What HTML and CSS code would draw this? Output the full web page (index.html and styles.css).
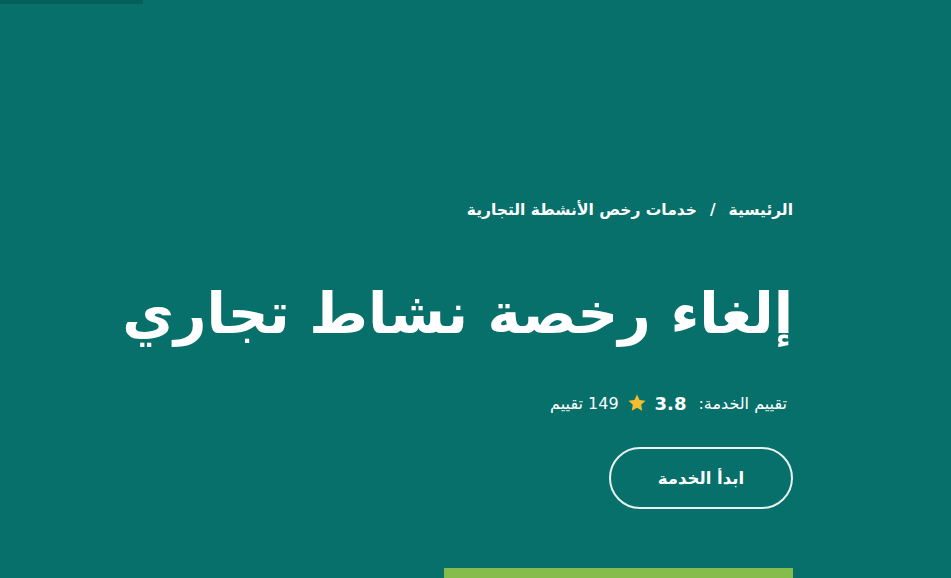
FILE: index.html
```html
<!DOCTYPE html>
<html lang="ar" dir="rtl">
<head>
<meta charset="utf-8">
<link rel="stylesheet" href="styles.css">
</head>
<body>
<div class="topbar"></div>
<main class="hero">
  <div class="container">
    <nav class="crumbs">
      <a href="#">الرئيسية</a>
      <span class="sep">/</span>
      <a href="#">خدمات رخص الأنشطة التجارية</a>
    </nav>
    <h1 class="title">إلغاء رخصة نشاط تجاري</h1>
    <div class="rating">
      <span class="label">تقييم الخدمة:</span>
      <span class="score">3.8</span>
      <svg class="star" viewBox="0 0 24 24" width="20" height="20"><path d="M12 1.8l3.1 6.5 7.1.9-5.2 4.9 1.3 7.1L12 17.8l-6.3 3.4 1.3-7.1L1.8 9.2l7.1-.9z" fill="#f5bd2e"/></svg>
      <span class="count">149 تقييم</span>
    </div>
    <a class="btn" href="#">ابدأ الخدمة</a>
    <div class="greenbar"></div>
  </div>
</main>
</body>
</html>
```
FILE: styles.css
```css
html, body {
  margin: 0;
  padding: 0;
  height: 100%;
  overflow: hidden;
}
body {
  background: #07706a;
  color: #fff;
  font-family: "DejaVu Sans", "Noto Sans", sans-serif;
}
.topbar {
  width: 143px;
  height: 4px;
  background: #05605a;
  margin-left: 0;
  margin-right: auto;
}
.hero {
  display: flex;
  justify-content: flex-start;
}
.container {
  margin-right: 158px;
  width: 700px;
  padding-top: 190px;
  display: flex;
  flex-direction: column;
  align-items: flex-start;
}
.crumbs {
  font-size: 15.5px;
  font-weight: bold;
  display: flex;
  gap: 13px;
  height: 32px;
  align-items: center;
}
.crumbs a { color: #fff; text-decoration: none; }
.title {
  margin: 43px 0 0;
  font-size: 56.5px;
  line-height: 90px;
  font-weight: bold;
  white-space: nowrap;
}
.rating {
  margin-top: 32px;
  margin-right: 6px;
  display: flex;
  align-items: center;
  gap: 8px;
  font-size: 16px;
  height: 24px;
}
.score { font-weight: bold; font-size: 18px; margin-right: 4px; }
.btn {
  margin-top: 32px;
  width: 180px;
  height: 58px;
  border: 2px solid #e8f2f1;
  border-radius: 31px;
  display: flex;
  align-items: center;
  justify-content: center;
  color: #fff;
  text-decoration: none;
  font-weight: bold;
  font-size: 16.5px;
}
.greenbar {
  margin-top: 59px;
  width: 349px;
  height: 12px;
  background: #84bd4c;
}
```
